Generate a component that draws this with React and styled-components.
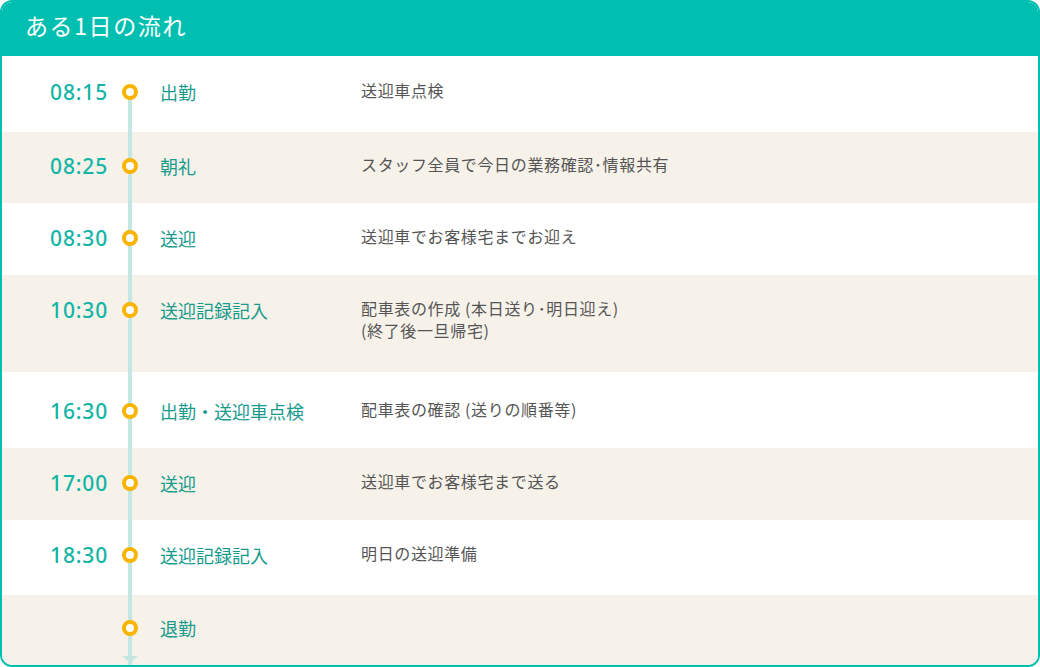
import React from "react";
import styled, { createGlobalStyle } from "styled-components";

const schedule = [
  { time: "08:15", title: "出勤", desc: ["送迎車点検"], h: 76, pt: 24 },
  { time: "08:25", title: "朝礼", desc: ["スタッフ全員で今日の業務確認･情報共有"], h: 71, pt: 22 },
  { time: "08:30", title: "送迎", desc: ["送迎車でお客様宅までお迎え"], h: 72, pt: 23 },
  {
    time: "10:30",
    title: "送迎記録記入",
    desc: ["配車表の作成 (本日送り･明日迎え)", "(終了後一旦帰宅)"],
    h: 97,
    pt: 23,
  },
  { time: "16:30", title: "出勤・送迎車点検", desc: ["配車表の確認 (送りの順番等)"], h: 76, pt: 27 },
  { time: "17:00", title: "送迎", desc: ["送迎車でお客様宅まで送る"], h: 72, pt: 23 },
  { time: "18:30", title: "送迎記録記入", desc: ["明日の送迎準備"], h: 75, pt: 23 },
  { time: "", title: "退勤", desc: [], h: 70, pt: 21 },
];

export default function App() {
  return (
    <>
      <GlobalStyle />
      <Card>
        <Header>ある1日の流れ</Header>
        <List>
          {schedule.map((item, i) => (
            <Row key={i} $alt={i % 2 === 1} $h={item.h} $pt={item.pt}>
              <Time>{item.time}</Time>
              <Marker
                $first={i === 0}
                $last={i === schedule.length - 1}
                $pt={item.pt}
              >
                <Dot />
              </Marker>
              <Title>{item.title}</Title>
              <Desc>
                {item.desc.map((line, j) => (
                  <div key={j}>{line}</div>
                ))}
              </Desc>
            </Row>
          ))}
        </List>
      </Card>
    </>
  );
}

const GlobalStyle = createGlobalStyle`
  * { box-sizing: border-box; }
  body {
    margin: 0;
    background: #fff;
    font-family: "Noto Sans CJK JP", "Noto Sans", sans-serif;
  }
`;

const Card = styled.div`
  width: 1040px;
  height: 667px;
  border: 2px solid #00bfb0;
  border-radius: 12px;
  overflow: hidden;
  background: #fff;
  display: flex;
  flex-direction: column;
`;

const Header = styled.div`
  height: 54px;
  background: #00bfb0;
  color: #fff;
  font-size: 23px;
  padding-left: 23px;
  display: flex;
  align-items: center;
  padding-bottom: 9px;
  letter-spacing: 0.07em;
`;

const List = styled.div`
  flex: 1;
  display: flex;
  flex-direction: column;
`;

const Row = styled.div`
  height: ${({ $h }) => $h}px;
  flex-shrink: 0;
  &:last-child {
    flex: 1;
  }
  padding-top: ${({ $pt }) => $pt}px;
  background: ${({ $alt }) => ($alt ? "#f6f2ea" : "#fff")};
  display: grid;
  grid-template-columns: 106px 44px 209px 1fr;
  align-items: start;
  line-height: 24px;
`;

const Time = styled.div`
  text-align: right;
  color: #13b5a6;
  font-family: "Noto Sans", sans-serif;
  font-weight: 500;
  font-size: 21px;
  letter-spacing: 0.04em;
`;

const Marker = styled.div`
  position: relative;
  height: 24px;
  display: flex;
  justify-content: center;
  align-items: center;
  &::before {
    content: "";
    position: absolute;
    left: 20px;
    width: 4px;
    background: #c4e7e4;
    top: ${({ $first, $pt }) => ($first ? "12px" : `-${$pt}px`)};
    height: ${({ $first, $last, $pt }) =>
      $first ? "60px" : $last ? `${$pt + 40}px` : "200px"};
    z-index: 0;
  }
  &::after {
    content: "";
    display: ${({ $last }) => ($last ? "block" : "none")};
    position: absolute;
    left: 14px;
    top: 40px;
    border-left: 8px solid transparent;
    border-right: 8px solid transparent;
    border-top: 7px solid #c4e7e4;
  }
`;

const Dot = styled.span`
  position: relative;
  z-index: 1;
  width: 16px;
  height: 16px;
  border-radius: 50%;
  border: 4px solid #f8b400;
  background: #fff;
`;

const Title = styled.div`
  padding-left: 8px;
  color: #169a8c;
  font-size: 18px;
`;

const Desc = styled.div`
  color: #555;
  font-size: 16px;
  line-height: 22px;
  margin-top: -1px;
  letter-spacing: 0.04em;
`;
